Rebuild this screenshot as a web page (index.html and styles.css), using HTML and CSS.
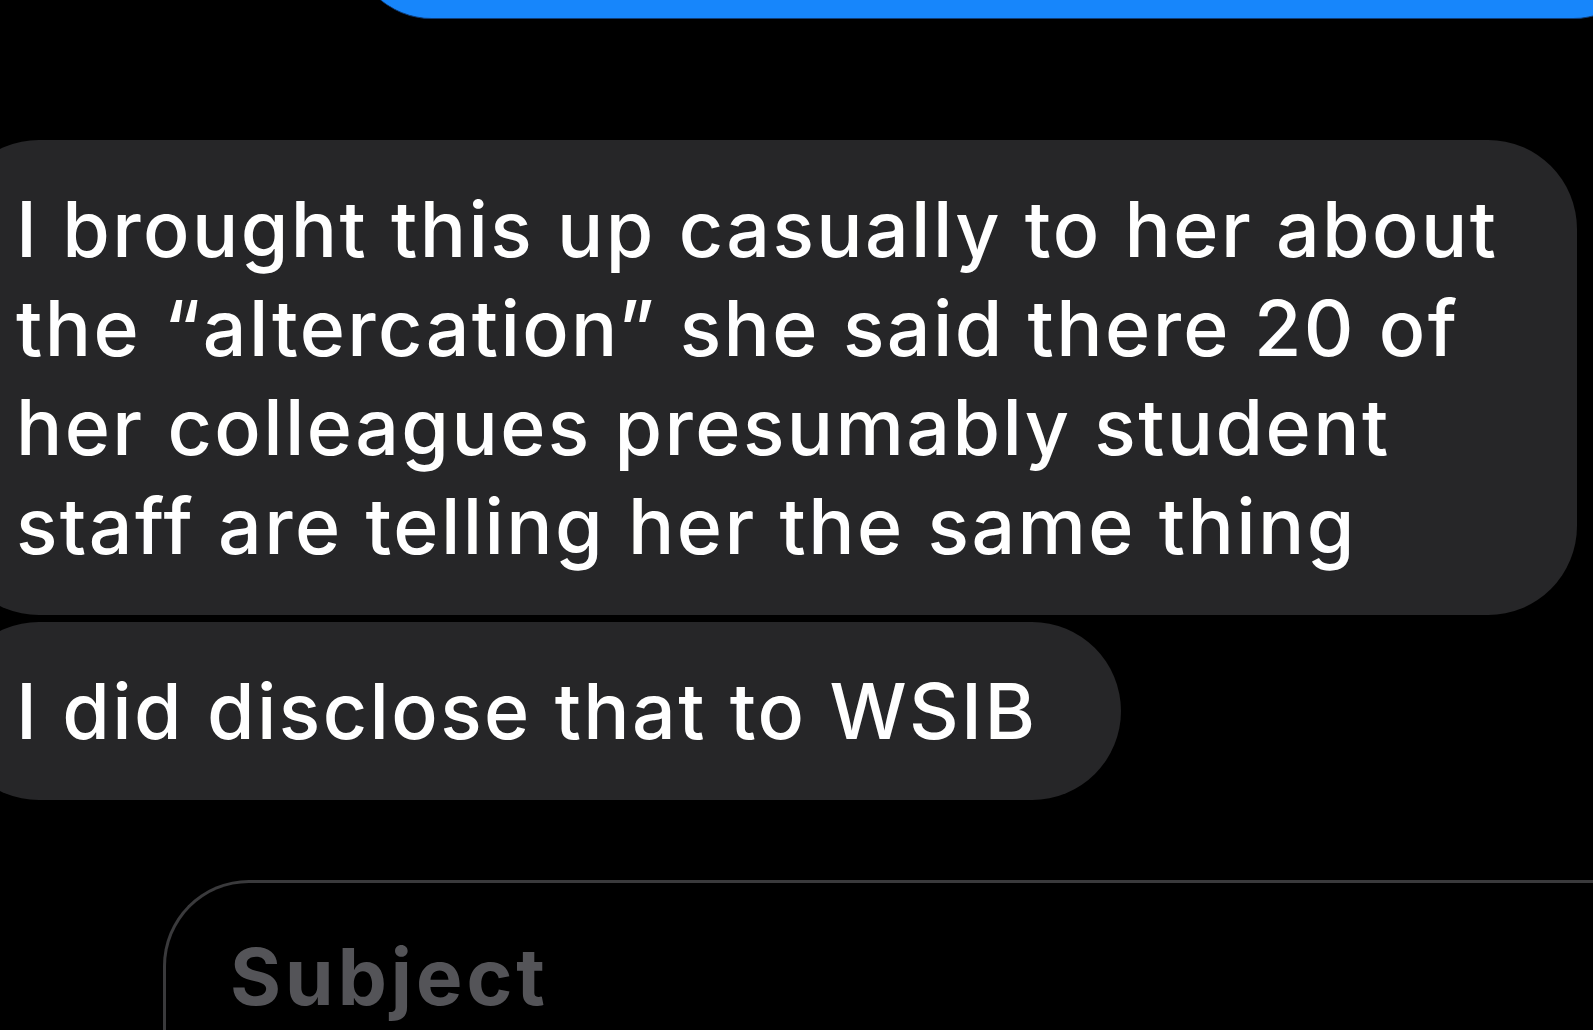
FILE: index.html
```html
<!DOCTYPE html>
<html>
<head>
    <meta charset="UTF-8">
    <link rel="stylesheet" href="styles.css">
</head>
<body>
    <main class="thread">
        <div class="bubble sent"></div>

        <div class="bubble received long">I brought this up casually to her about<br>the “altercation” she said there 20 of<br>her colleagues presumably student<br>staff are telling her the same thing</div>
        <div class="bubble received">I did disclose that to WSIB</div>
    </main>

    <div class="compose">
        <div class="subject">Subject</div>
    </div>
</body>
</html>
```

FILE: styles.css
```css
html, body { margin: 0; padding: 0; background: #000; }
body { width: 1593px; height: 1030px; overflow: hidden; font-family: Inter, "Noto Sans", sans-serif; color: #fff; }

.thread { display: flex; flex-direction: column; gap: 7px; }

.bubble { border-radius: 89px; box-sizing: border-box; }
.sent { background: #1786fb; height: 160px; margin-top: -141px; margin-left: 352px; margin-right: -60px; margin-bottom: 114px; border-bottom: 1px solid #0f3d78; }

.received { align-self: flex-start; margin-left: -50px; background: #262628; font-size: 77px; font-weight: 500; letter-spacing: 2.4px; line-height: 99px; padding: 39.5px 84px 39.5px 66px; white-space: nowrap; }
.long { width: 1627px; }

.compose { margin: 80px 0 0 163px; height: 150px; border: 3px solid #3a3a3c; border-right: none; border-bottom: none; border-radius: 86px 0 0 0; box-sizing: border-box; padding: 44px 0 0 64px; }
.subject { font-size: 78px; line-height: 99px; font-weight: 700; letter-spacing: 4px; color: #545458; }
```
